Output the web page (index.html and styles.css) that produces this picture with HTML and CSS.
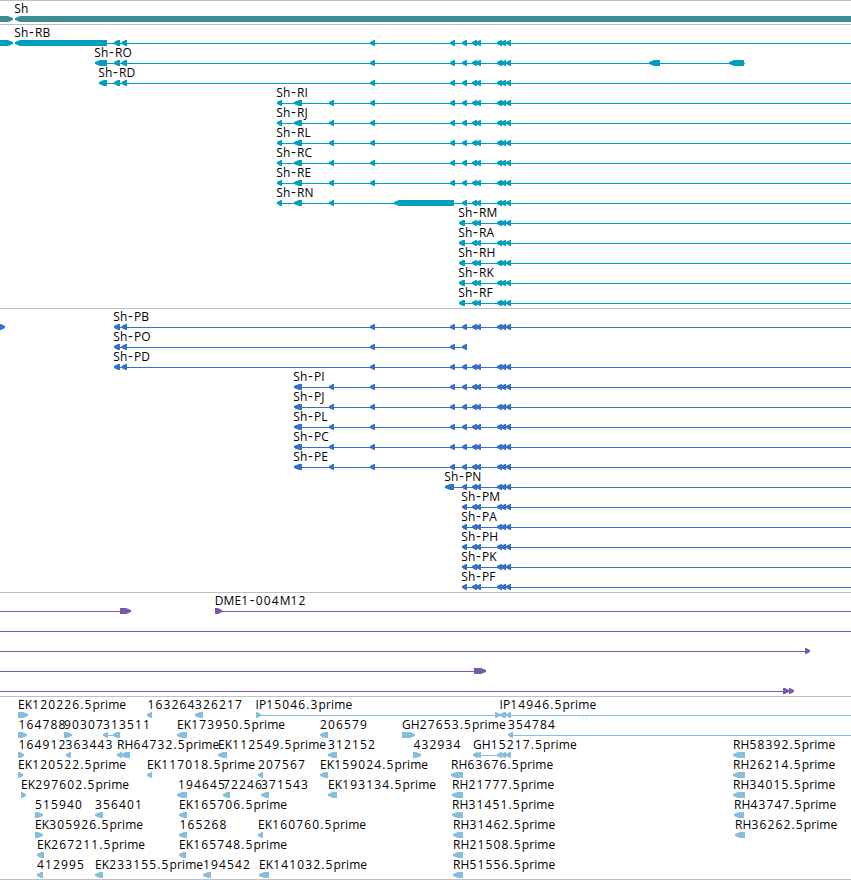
FILE: index.html
```html
<!DOCTYPE html>
<html lang="en">
<head>
    <meta charset="UTF-8">
    <meta name="viewport" content="width=device-width, initial-scale=1.0">
    <title>Sh region</title>
    <link rel="stylesheet" href="styles.css">
</head>
<body>
    <div class="viewer">
        <div class="track gene" id="gene"></div>
        <div class="track transcript" id="transcript"></div>
        <div class="track protein" id="protein"></div>
        <div class="track bac" id="bac"></div>
        <div class="track est" id="est"></div>
    </div>
    <script src="tracks.js"></script>
</body>
</html>
```

FILE: styles.css
```css
body {
    margin: 0;
    background-color: #fff;
    overflow: hidden;
}
.viewer {
    width: 851px;
    border-bottom: 1px solid #c0c0c0;
}
.track {
    border-top: 1px solid #c0c0c0;
    padding-bottom: 3px;
}
.track:last-child {
    padding-bottom: 2px;
}
.row {
    display: block;
    width: 851px;
    height: 20px;
    overflow: visible;
}
.gene {
    color: #3c8d93;
}
.transcript {
    color: #009fbf;
}
.protein {
    color: #3370cc;
}
.bac {
    color: #7859a8;
}
.est {
    color: #88bedd;
}
.row rect,
.row polygon {
    fill: currentColor;
}
.row text {
    font-family: "Open Sans", "Noto Sans", sans-serif;
    font-size: 12px;
    letter-spacing: 0.12px;
    fill: #000;
    white-space: pre;
}
.row .num {
    letter-spacing: 1.13px;
}
.row .dash {
    font-size: 15px;
    letter-spacing: 1px;
}
```

FILE: tracks.js
```js
// feature: { n: label, x: label start, line: [from, to], l: left arrows, r: right arrows }
const WIDTH = 851;
const TIP = 5;

const tail = [[462, 467], [472, 477], [476, 481], [497, 502], [501, 506], [506, 511]];
const common = [[370, 375], [450, 455], ...tail];
const start = [[114, 120], [121.5, 127]];

function open(n, x, l) {
    return { n: n, x: x, line: [Math.round(l[0][0]) + TIP, WIDTH], l: l };
}
function est(n, x, from, to, dir) {
    return { n: n, x: x, [dir || 'l']: [[from, to]] };
}

const tracks = {
    gene: [
        [{ r: [[0, 13]] }, { n: 'Sh', x: 14.3, l: [[15, WIDTH]] }]
    ],
    transcript: [
        [{ r: [[0, 13]] }, open('Sh-RB', 14.3, [[15, 107], ...start, ...common])],
        [{ n: 'Sh-RO', x: 94.3, line: [100, 745], l: [[95, 107], ...start, ...common, [649, 660], [729, 744]] }],
        [open('Sh-RD', 98.3, [[99, 107], ...start, ...common])],
        ...['RI', 'RJ', 'RL', 'RC', 'RE'].map(t =>
            [open('Sh-' + t, 276.3, [[277, 282], [294, 302], [329, 334], ...common])]),
        [open('Sh-RN', 276.3, [[277, 282], [294, 302], [329, 334], [394, 454], ...tail])],
        ...['RM', 'RA', 'RH', 'RK', 'RF'].map(t =>
            [open('Sh-' + t, 458.3, [[459, 465], ...tail.slice(1)])])
    ],
    protein: [
        [{ r: [[0, 5]] }, open('Sh-PB', 113.3, [...start, ...common])],
        [{ n: 'Sh-PO', x: 113.3, line: [118, 467], l: [...start, ...common.slice(0, 3)] }],
        [open('Sh-PD', 113.3, [...start, ...common])],
        ...['PI', 'PJ', 'PL', 'PC', 'PE'].map(t =>
            [open('Sh-' + t, 293.3, [[294, 302], [329, 334], ...common])]),
        [open('Sh-PN', 444.3, [[445, 454], ...tail])],
        ...['PM', 'PA', 'PH', 'PK', 'PF'].map(t => [open('Sh-' + t, 461.3, tail)])
    ],
    bac: [
        [{ line: [0, 120], r: [[120, 131]] }, { n: 'DME1-004M12', x: 214.7, line: [215, WIDTH], r: [[215, 222]] }],
        [{ line: [0, WIDTH] }],
        [{ line: [0, 805], r: [[805, 810]] }],
        [{ line: [0, 474], r: [[474, 486]] }],
        [{ line: [0, 783], r: [[783, 789], [789, 794]] }]
    ],
    est: [
        [
            est('EK120226.5prime', 18, 18, 28, 'r'),
            est('163264', 147.5, 147, 152),
            est('326217', 195, 195, 203),
            { n: 'IP15046.3prime', x: 255.5, line: [256, 495], r: [[256, 261], [495, 500]] },
            { n: 'IP14946.5prime', x: 499.5, line: [505, WIDTH], l: [[500, 506], [506, 511]] }
        ],
        [
            est('164788', 18.5, 18, 27, 'r'),
            est('90307', 64, 64, 72, 'r'),
            { n: '313511', x: 103, line: [108, 118], l: [[103, 108], [113, 120]] },
            est('EK173950.5prime', 177, 177, 187),
            est('206579', 320, 320, 328),
            est('GH27653.5prime', 402, 402, 415, 'r'),
            { n: '354784', x: 508, line: [512, WIDTH], l: [[508, 513]] }
        ],
        [
            est('164912', 18.5, 18, 24, 'r'),
            est('363443', 65.5, 66, 71),
            { n: 'RH64732.5prime', x: 117, l: [[117, 122], [121, 130]] },
            est('EK112549.5prime', 218, 218, 227),
            est('312152', 328, 328, 337),
            est('432934', 413.5, 413, 421, 'r'),
            { n: 'GH15217.5prime', x: 473, line: [478, 500], l: [[473, 478], [476, 481], ...tail.slice(3)] },
            est('RH58392.5prime', 733, 733, 745)
        ],
        [
            est('EK120522.5prime', 18, 18, 23, 'r'),
            est('EK117018.5prime', 147, 147, 152),
            est('207567', 258, 258, 263),
            est('EK159024.5prime', 320, 320, 328),
            est('RH63676.5prime', 451, 451, 463),
            est('RH26214.5prime', 733, 733, 745)
        ],
        [
            est('EK297602.5prime', 21, 21, 26, 'r'),
            est('194645', 178, 177, 187),
            est('72246', 223, 223, 230),
            est('371543', 261, 261, 269),
            est('EK193134.5prime', 328, 328, 337),
            est('RH21777.5prime', 452, 452, 463),
            est('RH34015.5prime', 733, 733, 745)
        ],
        [
            est('515940', 35, 35, 43, 'r'),
            est('356401', 95, 95, 103),
            est('EK165706.5prime', 179, 179, 187),
            est('RH31451.5prime', 452, 452, 463),
            est('RH43747.5prime', 734, 734, 744)
        ],
        [
            est('EK305926.5prime', 35, 35, 43, 'r'),
            est('165268', 179.5, 179, 187),
            est('EK160760.5prime', 258, 258, 263),
            est('RH31462.5prime', 453, 453, 463),
            est('RH36262.5prime', 735, 735, 745)
        ],
        [
            est('EK267211.5prime', 37, 37, 44),
            est('EK165748.5prime', 179, 179, 186),
            est('RH21508.5prime', 453, 453, 463)
        ],
        [
            est('412995', 37, 37, 43),
            est('EK233155.5prime', 95, 95, 103),
            est('194542', 203, 203, 211),
            est('EK141032.5prime', 259, 259, 269),
            est('RH51556.5prime', 453, 453, 463)
        ]
    ]
};

function arrow(a, b, dir) {
    // small arrows get a blunter head
    const tip = b - a < 8 ? TIP - 1 : TIP;
    const point = dir === 'l' ? a : b;
    const back = dir === 'l' ? b : a;
    const neck = dir === 'l' ? a + tip : b - tip;
    return `<polygon points="${point},17 ${neck},15 ${back},15 ${back},21 ${neck},21 ${point},19"/>`;
}

function label(text) {
    return text
        .replace(/[\d.]+/g, '<tspan class="num">$&</tspan>')
        .replace('-', '<tspan class="dash" dx="0.6">-</tspan>');
}

function feature(f) {
    let out = '';
    if (f.line) {
        out += `<rect x="${f.line[0]}" y="18" width="${f.line[1] - f.line[0]}" height="1"/>`;
    }
    (f.l || []).forEach(e => out += arrow(e[0], e[1], 'l'));
    (f.r || []).forEach(e => out += arrow(e[0], e[1], 'r'));
    if (f.n) {
        out += `<text x="${f.x}" y="12">${label(f.n)}</text>`;
    }
    return out;
}

for (const id in tracks) {
    document.getElementById(id).innerHTML = tracks[id]
        .map(row => `<svg class="row">${row.map(feature).join('')}</svg>`)
        .join('');
}
```
